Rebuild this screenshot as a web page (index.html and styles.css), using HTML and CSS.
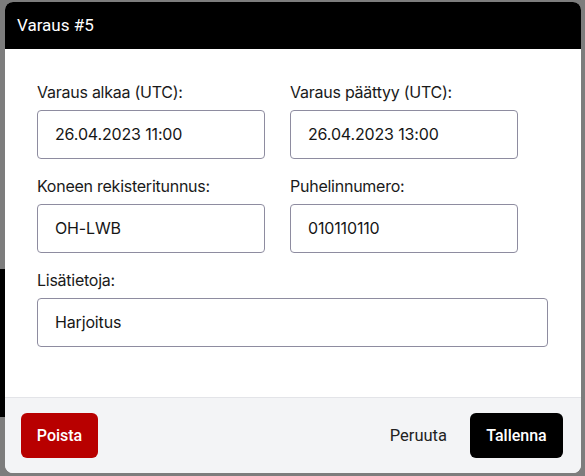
FILE: index.html
```html
<!DOCTYPE html>
<html>
<head>
	<meta charset="utf-8">
	<title>Varaus #5</title>
<link rel="stylesheet" href="styles.css">
</head>

<body>

<div class="backdrop">
<div class="modal">
<div class="modal_head">Varaus #5</div>

<div class="modal_body">
<div class="field">
<label>Varaus alkaa (UTC):</label>
<div class="input">26.04.2023 11:00</div>
</div>
<div class="field">
<label>Varaus päättyy (UTC):</label>
<div class="input">26.04.2023 13:00</div>
</div>
<div class="field">
<label>Koneen rekisteritunnus:</label>
<div class="input">OH-LWB</div>
</div>
<div class="field">
<label>Puhelinnumero:</label>
<div class="input">010110110</div>
</div>
<div class="field field_wide">
<label>Lisätietoja:</label>
<div class="input">Harjoitus</div>
</div>
</div>

<div class="modal_foot">
<a class="btn btn_delete">Poista</a>
<span class="spacer"></span>
<a class="btn btn_cancel">Peruuta</a>
<a class="btn btn_save">Tallenna</a>
</div>
</div>
</div>

</body>
</html>
```

FILE: styles.css
```css
html, body {
	margin: 0;
	padding: 0;
}

body {
	background-color: #7d7d7d;
	font-family: Inter, "Noto Sans", sans-serif;
}

.backdrop {
	width: 585px;
	height: 476px;
	padding: 2px 4px 0 5px;
	box-sizing: border-box;
	background: linear-gradient(to bottom, transparent 269px, #000 269px, #000 417px, transparent 417px) no-repeat 0 0 / 5px 476px;
}

.modal {
	width: 576px;
	height: 471px;
	background-color: #fff;
	border-radius: 8px;
	overflow: hidden;
	display: flex;
	flex-direction: column;
}

.modal_head {
	background-color: #000;
	color: #fff;
	height: 47px;
	padding: 0 12px;
	font-family: Roboto, sans-serif;
	font-size: 17px;
	line-height: 47px;
}

.modal_body {
	flex: 1;
	display: grid;
	grid-template-columns: 228px 228px;
	column-gap: 25px;
	row-gap: 17px;
	align-content: start;
	padding: 33px 32px 0 32px;
}

.field label {
	display: block;
	font-size: 16px;
	letter-spacing: -0.25px;
	color: #1a1a1a;
	line-height: 20px;
	margin-bottom: 8px;
}

.field_wide {
	grid-column: 1 / 3;
	width: 511px;
}

.input {
	height: 49px;
	box-sizing: border-box;
	border: 1px solid #8e8ca0;
	border-radius: 4px;
	padding: 0 17px;
	font-size: 16px;
	letter-spacing: -0.15px;
	line-height: 47px;
	color: #161616;
}

.modal_foot {
	height: 76px;
	box-sizing: border-box;
	background-color: #f3f4f6;
	border-top: 1px solid #e3e4e8;
	display: flex;
	align-items: center;
	padding: 0 18px 0 16px;
	gap: 23px;
}

.spacer {
	flex: 1;
}

.btn {
	display: inline-block;
	height: 45px;
	line-height: 45px;
	border-radius: 6px;
	font-family: Roboto, sans-serif;
	font-size: 16px;
	font-weight: 500;
	text-align: center;
}

.btn_delete {
	width: 77px;
	background-color: #b80000;
	color: #fff;
}

.btn_cancel {
	color: #222;
	font-weight: normal;
	font-size: 16.5px;
}

.btn_save {
	width: 93px;
	background-color: #000;
	color: #fff;
}
```
